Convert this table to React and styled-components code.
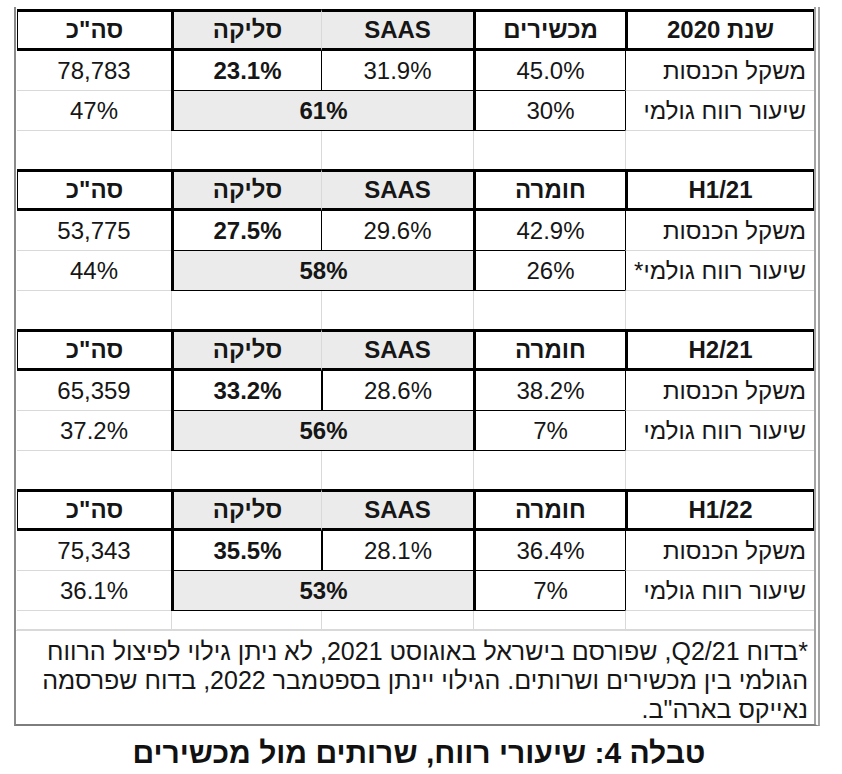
import React from 'react';
import styled, { createGlobalStyle } from 'styled-components';

const GlobalStyle = createGlobalStyle`
  * { box-sizing: border-box; }
  body {
    margin: 0;
    background: #fff;
    font-family: "Liberation Sans", Arial, sans-serif;
    color: #161616;
  }
`;

const LINES = {
  thick: '3px solid #000',
  mid: '2px solid #000',
  thin: '1px solid #000',
  grid: '1px solid #d9d9d9',
  none: '0 none',
};
const line = (k) => LINES[k || 'none'];

const Page = styled.div`
  padding: 7px 0 0 14px;
  width: 842px;
`;

const Frame = styled.div`
  width: 806px;
  border-left: 2px solid #8a8a8a;
  border-right: 6px double #a3a3a3;
  border-bottom: 2px solid #7d7d7d;
  padding-top: 2px;
  direction: rtl;
`;

const Block = styled.div`
  display: grid;
  grid-template-columns: 189px 152px 152px 150px 154px;
  grid-template-rows: 42px 40px 40px ${(p) => (p.$last ? '19px' : '38px')};
`;

const Cell = styled.div`
  display: flex;
  align-items: center;
  justify-content: ${(p) => (p.$start ? 'flex-start' : 'center')};
  padding: 0 ${(p) => (p.$start ? '8px' : '4px')};
  grid-column: span ${(p) => p.$span || 1};
  background: ${(p) => (p.$fill ? '#ebebeb' : '#fff')};
  font-size: 24px;
  font-weight: ${(p) => (p.$bold ? 700 : 400)};
  white-space: nowrap;
  border-top: ${(p) => line(p.$t)};
  border-bottom: ${(p) => line(p.$b)};
  border-left: ${(p) => line(p.$l)};
  border-right: ${(p) => line(p.$r)};
`;

const Note = styled.div`
  border-top: 1px solid #d9d9d9;
  padding: 6px 6px 4px 0;
  font-size: 25px;
  line-height: 29px;
  text-align: right;
  white-space: nowrap;
  height: 94px;
`;

const Caption = styled.div`
  width: 806px;
  margin-top: 11px;
  padding-left: 4px;
  text-align: center;
  direction: rtl;
  font-size: 30px;
  font-weight: 700;
  line-height: 32px;
  color: #111;
`;

const blocks = [
  {
    head: 'שנת 2020', kind: 'מכשירים',
    share: ['45.0%', '31.9%', '23.1%', '78,783'],
    margin: ['30%', '61%', '47%'],
    label: 'שיעור רווח גולמי', split: 'thin',
  },
  {
    head: 'H1/21', kind: 'חומרה',
    share: ['42.9%', '29.6%', '27.5%', '53,775'],
    margin: ['26%', '58%', '44%'],
    label: 'שיעור רווח גולמי*', split: 'thin',
  },
  {
    head: 'H2/21', kind: 'חומרה',
    share: ['38.2%', '28.6%', '33.2%', '65,359'],
    margin: ['7%', '56%', '37.2%'],
    label: 'שיעור רווח גולמי', split: 'mid',
  },
  {
    head: 'H1/22', kind: 'חומרה',
    share: ['36.4%', '28.1%', '35.5%', '75,343'],
    margin: ['7%', '53%', '36.1%'],
    label: 'שיעור רווח גולמי', split: 'mid',
  },
];

function YearBlock({ data, last }) {
  const [hw, saas, clearing, total] = data.share;
  const [hwMargin, svcMargin, totalMargin] = data.margin;
  return (
    <Block $last={last}>
      <Cell $bold $t="thick" $b="thick" $l="thick" $r="thin">{data.head}</Cell>
      <Cell $bold $t="thick" $b="thick" $l="thick">{data.kind}</Cell>
      <Cell $bold $fill $t="thick" $b="thick" $l="grid">SAAS</Cell>
      <Cell $bold $fill $t="thick" $b="thick" $l="thick">סליקה</Cell>
      <Cell $bold $t="thick" $b="thick" $l="thin">סה"כ</Cell>

      <Cell $start $b="grid" $l="thin">משקל הכנסות</Cell>
      <Cell $b="thin" $l="thick">{hw}</Cell>
      <Cell $b="thin" $l={data.split}>{saas}</Cell>
      <Cell $bold $b="thin" $l="thick">{clearing}</Cell>
      <Cell $b="grid">{total}</Cell>

      <Cell $start $b="grid" $l="thin">{data.label}</Cell>
      <Cell $b="thin" $l="thick">{hwMargin}</Cell>
      <Cell $bold $fill $span={2} $b="thin" $l="thick">{svcMargin}</Cell>
      <Cell $b="grid">{totalMargin}</Cell>

      <Cell $b={last ? 'grid' : 'none'} $l="grid" />
      <Cell $b={last ? 'grid' : 'none'} $l="grid" />
      <Cell $b={last ? 'grid' : 'none'} $l="grid" />
      <Cell $b={last ? 'grid' : 'none'} $l="grid" />
      <Cell $b={last ? 'grid' : 'none'} />
    </Block>
  );
}

export default function App() {
  return (
    <Page>
      <GlobalStyle />
      <Frame>
        {blocks.map((b, i) => (
          <YearBlock key={b.head} data={b} last={i === blocks.length - 1} />
        ))}
        <Note>
          *בדוח Q2/21, שפורסם בישראל באוגוסט 2021, לא ניתן גילוי לפיצול הרווח
          <br />
          הגולמי בין מכשירים ושרותים. הגילוי יינתן בספטמבר 2022, בדוח שפרסמה
          <br />
          נאייקס בארה"ב.
        </Note>
      </Frame>
      <Caption>טבלה 4: שיעורי רווח, שרותים מול מכשירים</Caption>
    </Page>
  );
}
